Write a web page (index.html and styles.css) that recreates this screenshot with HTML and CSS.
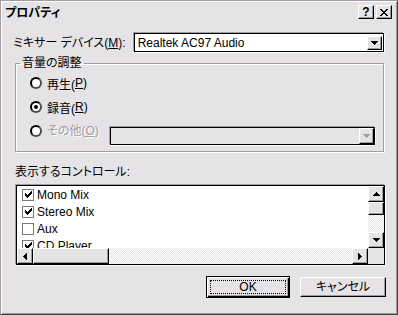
FILE: index.html
```html
<!DOCTYPE html>
<html lang="ja">
<head>
  <meta charset="UTF-8" />
  <title>プロパティ</title>
  <link rel="stylesheet" href="styles.css">
</head>
<body>

  <div class="window">
    <div class="titlebar">
      <span class="title">プロパティ</span>
      <div class="caption-buttons">
        <span class="cap-btn help">?</span>
        <span class="cap-btn">
          <svg width="8" height="7" viewBox="0 0 8 7"><path d="M0 0h2v1H0zM6 0h2v1H6zM1 1h2v1H1zM5 1h2v1H5zM2 2h4v1H2zM3 3h2v1H3zM2 4h4v1H2zM1 5h2v1H1zM5 5h2v1H5zM0 6h2v1H0zM6 6h2v1H6z"/></svg>
        </span>
      </div>
    </div>

    <div class="content">
      <div class="device-row">
        <span class="device-label">ミキサー デバイス(<u>M</u>):</span>
        <div class="combo main-combo">
          <span class="combo-text">Realtek AC97 Audio</span>
          <span class="drop-btn">
            <svg width="7" height="4" viewBox="0 0 7 4"><path d="M0 0h7v1H0zM1 1h5v1H1zM2 2h3v1H2zM3 3h1v1H3z"/></svg>
          </span>
        </div>
      </div>

      <fieldset class="group">
        <legend>音量の調整</legend>
        <div class="radio-row"><span class="radio"></span>再生(<u>P</u>)</div>
        <div class="radio-row"><span class="radio checked"></span>録音(<u>R</u>)</div>
        <div class="radio-row other">
          <span class="radio"></span>
          <span class="disabled-text">その他(<u>O</u>)</span>
          <div class="combo off-combo">
            <span class="drop-btn">
              <svg width="7" height="4" viewBox="0 0 7 4"><path fill="#a09ca0" d="M0 0h7v1H0zM1 1h5v1H1zM2 2h3v1H2zM3 3h1v1H3z"/></svg>
            </span>
          </div>
        </div>
      </fieldset>

      <div class="list-label">表示するコントロール:</div>

      <div class="listbox">
        <div class="list-main">
          <div class="list-items">
            <div class="item"><span class="check on"><svg width="7" height="7" viewBox="0 0 7 7"><path d="M6 0h1v1H6zM5 1h2v1H5zM0 2h1v1H0zM4 2h3v1H4zM0 3h2v1H0zM3 3h3v1H3zM0 4h5v1H0zM1 5h3v1H1zM2 6h1v1H2z"/></svg></span>Mono Mix</div>
            <div class="item"><span class="check on"><svg width="7" height="7" viewBox="0 0 7 7"><path d="M6 0h1v1H6zM5 1h2v1H5zM0 2h1v1H0zM4 2h3v1H4zM0 3h2v1H0zM3 3h3v1H3zM0 4h5v1H0zM1 5h3v1H1zM2 6h1v1H2z"/></svg></span>Stereo Mix</div>
            <div class="item"><span class="check"></span>Aux</div>
            <div class="item"><span class="check on"><svg width="7" height="7" viewBox="0 0 7 7"><path d="M6 0h1v1H6zM5 1h2v1H5zM0 2h1v1H0zM4 2h3v1H4zM0 3h2v1H0zM3 3h3v1H3zM0 4h5v1H0zM1 5h3v1H1zM2 6h1v1H2z"/></svg></span>CD Player</div>
          </div>
          <div class="vscroll">
            <span class="sb-btn">
              <svg width="7" height="4" viewBox="0 0 7 4"><path d="M3 0h1v1H3zM2 1h3v1H2zM1 2h5v1H1zM0 3h7v1H0z"/></svg>
            </span>
            <span class="sb-thumb v"></span>
            <span class="sb-track"></span>
            <span class="sb-btn">
              <svg width="7" height="4" viewBox="0 0 7 4"><path d="M0 0h7v1H0zM1 1h5v1H1zM2 2h3v1H2zM3 3h1v1H3z"/></svg>
            </span>
          </div>
        </div>
        <div class="hscroll-row">
          <div class="hscroll">
            <span class="sb-btn">
              <svg width="4" height="7" viewBox="0 0 4 7"><path d="M3 0h1v7H3zM2 1h1v5H2zM1 2h1v3H1zM0 3h1v1H0z"/></svg>
            </span>
            <span class="sb-thumb h"></span>
            <span class="sb-track"></span>
            <span class="sb-btn">
              <svg width="4" height="7" viewBox="0 0 4 7"><path d="M0 0h1v7H0zM1 1h1v5H1zM2 2h1v3H2zM3 3h1v1H3z"/></svg>
            </span>
          </div>
          <span class="corner"></span>
        </div>
      </div>

      <div class="buttons">
        <span class="btn default"><span class="focus">OK</span></span>
        <span class="btn">キャンセル</span>
      </div>
    </div>
  </div>

</body>
</html>
```

FILE: styles.css
```css
* {
  box-sizing: border-box;
}

body {
  margin: 0;
  background: #e6e3e6;
  color: #000;
  font-family: "Liberation Sans", "Noto Sans CJK JP", sans-serif;
  font-size: 12px;
  font-feature-settings: "palt";
}

u {
  text-decoration: underline;
  text-underline-offset: 1px;
}

.window {
  width: 398px;
  height: 315px;
  display: flex;
  flex-direction: column;
  border: 1px solid;
  border-color: #a09ca0 #404040 #404040 #a09ca0;
  box-shadow: inset 1px 1px #fff, inset -1px -1px #a09ca0;
}

/* タイトル */
.titlebar {
  height: 21px;
  display: flex;
  justify-content: space-between;
  padding: 4px 5px 0 4px;
}

.title {
  font-weight: bold;
  line-height: 14px;
  margin-top: 1px;
}

.caption-buttons {
  display: flex;
  gap: 2px;
}

.cap-btn {
  width: 16px;
  height: 14px;
  display: flex;
  align-items: center;
  justify-content: center;
  background: #e6e3e6;
  border: 1px solid;
  border-color: #fff #000 #000 #fff;
  box-shadow: inset -1px -1px #a09ca0;
}

.cap-btn.help {
  font-weight: bold;
  font-size: 12px;
  line-height: 12px;
  font-family: "Liberation Sans", sans-serif;
}

.content {
  flex: 1;
  display: flex;
  flex-direction: column;
  padding: 0 12px 0 14px;
}

/* コンボボックス */
.device-row {
  display: flex;
  align-items: center;
  margin: 10px 0 0 -2px;
}

.device-label {
  width: 120px;
  line-height: 14px;
}

.combo {
  display: flex;
  align-items: flex-start;
  margin: 1px;
  border: 1px solid #000;
  box-shadow: -1px -1px #a09ca0, 1px 1px #fff;
}

.main-combo {
  width: 251px;
  height: 19px;
  padding: 2px 1px 1px;
  background: #fff;
}

.combo-text {
  flex: 1;
  line-height: 14px;
  padding-left: 2px;
}

.drop-btn {
  width: 15px;
  height: 14px;
  margin-left: auto;
  display: flex;
  align-items: center;
  justify-content: center;
  background: #e6e3e6;
  border: 1px solid;
  border-color: #fff #000 #000 #fff;
  box-shadow: inset -1px -1px #a09ca0;
}

.off-combo {
  width: 265px;
  height: 18px;
  margin: 8px 0 0 auto;
  background: #e6e3e6;
}

.off-combo .drop-btn {
  width: 15px;
  height: 16px;
}

/* グループ */
.group {
  margin: 3px 1px 0 0;
  padding: 1px 8px 8px 4px;
  min-width: 0;
  border: 1px solid #a09ca0;
  box-shadow: inset 1px 1px #fff, 1px 1px #fff;
}

.group legend {
  padding: 0 2px;
  line-height: 14px;
}

.radio-row {
  height: 24px;
  display: flex;
  align-items: center;
  padding-left: 10px;
}

.radio-row.other {
  align-items: flex-start;
  line-height: 24px;
}

.radio {
  flex: none;
  width: 12px;
  height: 12px;
  margin-right: 5px;
  border-radius: 50%;
  background: #fff;
  border: 2px solid;
  border-color: #000 #505050 #505050 #000;
  display: flex;
  align-items: center;
  justify-content: center;
}

.radio-row.other .radio {
  margin-top: 6px;
}

.radio.checked::after {
  content: "";
  width: 4px;
  height: 4px;
  border-radius: 50%;
  background: #000;
}

.disabled-text {
  color: #a09ca0;
  text-shadow: 1px 1px #fff;
}

/* リスト */
.list-label {
  margin-top: 13px;
  line-height: 14px;
}

.listbox {
  width: 369px;
  height: 80px;
  margin: 6px 0 0 1px;
  display: flex;
  flex-direction: column;
  background: #fff;
  border: 1px solid #000;
  box-shadow: -1px -1px #a09ca0, 1px 1px #fff;
}

.list-main {
  height: 62px;
  display: flex;
}

.list-items {
  flex: 1;
  overflow: hidden;
}

.item {
  height: 17px;
  display: flex;
  align-items: center;
  padding-left: 5px;
}

.check {
  width: 12px;
  height: 12px;
  margin-right: 3px;
  display: flex;
  align-items: center;
  justify-content: center;
  background: #fff;
  border: 1px solid #7c797c;
}

.vscroll {
  width: 16px;
  display: flex;
  flex-direction: column;
}

.hscroll-row {
  height: 16px;
  display: flex;
}

.hscroll {
  flex: 1;
  display: flex;
}

.sb-btn,
.sb-thumb {
  flex: none;
  display: flex;
  align-items: center;
  justify-content: center;
  background: #e6e3e6;
  border: 1px solid;
  border-color: #fff #000 #000 #fff;
  box-shadow: inset -1px -1px #a09ca0;
}

.sb-btn {
  width: 16px;
  height: 16px;
}

.sb-thumb.v {
  height: 13px;
}

.sb-thumb.h {
  width: 76px;
}

.sb-track {
  flex: 1;
  background-image: repeating-conic-gradient(#fff 0% 25%, #e6e3e6 0% 50%);
  background-size: 2px 2px;
}

.corner {
  width: 16px;
  background: #e6e3e6;
}

/* ボタン */
.buttons {
  display: flex;
  justify-content: flex-end;
  align-items: center;
  gap: 10px;
  height: 22px;
  margin: 11px -1px 0 0;
}

.btn {
  width: 86px;
  height: 20px;
  display: flex;
  align-items: center;
  justify-content: center;
  line-height: 14px;
  background: #e6e3e6;
  border: 1px solid;
  border-color: #fff #000 #000 #fff;
  box-shadow: inset -1px -1px #a09ca0;
}

.btn.default {
  width: 84px;
  height: 22px;
  padding: 3px;
  border: 1px solid #000;
  box-shadow: inset 1px 1px #fff, inset -1px -1px #000, inset -2px -2px #a09ca0;
}

.focus {
  width: 100%;
  height: 100%;
  display: flex;
  align-items: center;
  justify-content: center;
  border: 1px dotted #000;
}
```
